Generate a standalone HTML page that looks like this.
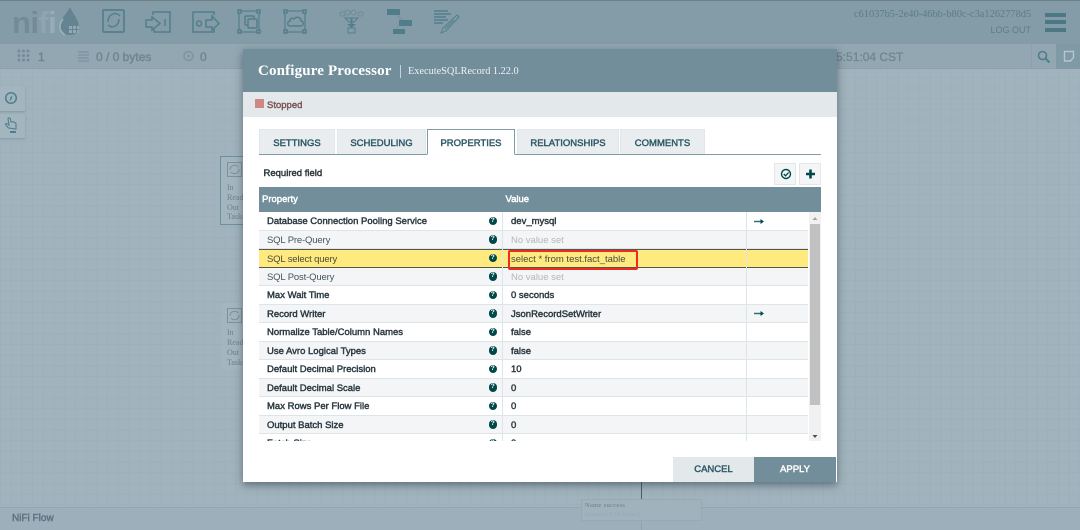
<!DOCTYPE html>
<html><head><meta charset="utf-8">
<style>
*{box-sizing:border-box}
html,body{margin:0;padding:0;width:1080px;height:530px;overflow:hidden;font-family:"Liberation Sans",sans-serif}
.a{position:absolute}
.m{font-weight:normal;-webkit-text-stroke:.45px currentColor}
#root{position:relative;width:1080px;height:530px;overflow:hidden;background:#a1b3bd;
background-image:linear-gradient(#9dafba 1px,transparent 1px),linear-gradient(90deg,#9dafba 1px,transparent 1px);background-size:10.7px 10.7px;background-position:0 2px}
.hdr{left:0;top:0;width:1080px;height:44px;background:#849ca8;border-top:1px solid #6f7f88}
.sb{left:0;top:44px;width:1080px;height:25px;background:#92a7b2;border-bottom:1px solid #8ca1ac}
.st{font-size:12px;color:#6f858f;top:49.500px;line-height:15px;-webkit-text-stroke:.45px #6f858f}
.foot{left:0;top:507px;width:1080px;height:23px;background:#9cafba;border-top:1px solid #92a6b1;font-size:10px;color:#5c7480;-webkit-text-stroke:.45px #5c7480;line-height:22px;padding-left:12px}
.btnl{left:0;width:25px;background:#a3b5bf;box-shadow:0 1px 2px rgba(70,90,100,.3)}
.proc{background:#a3b5bf;font:8px "Liberation Serif",serif;color:#6c818c;overflow:hidden}
.proc div{position:absolute;left:6px}
.dlg{left:243px;top:49px;width:594px;height:433px;background:#fff;box-shadow:0 3px 8px rgba(40,55,65,.55)}
.dh{left:0;top:0;width:594px;height:43px;background:#728e9b}
.title{left:15px;top:11.500px;font:bold 15px/20px "Liberation Serif",serif;letter-spacing:.15px;color:#fff;white-space:nowrap}
.sub{left:165px;top:16px;font:10.300px/14px "Liberation Serif",serif;color:#eef2f4;white-space:nowrap}
.ss{left:0;top:43px;width:594px;height:25px;background:#e3e8eb}
.tab{top:80px;height:25px;background:#e9edef;border:1px solid #e1e6e9;border-bottom:none;font-size:9.500px;-webkit-text-stroke:.45px #2f5a68;color:#2f5a68;text-align:center;line-height:27px;white-space:nowrap}
.tabon{background:#fff;border:1px solid #7f9ba5;border-bottom:1px solid #fff;z-index:2;height:26px}
.sq{top:114px;width:22px;height:22px;background:#f3f5f6;border:1px solid #e3e7ea}
.th{left:16px;top:138px;width:562px;height:25px;background:#728e9b;color:#fff;font-size:9.500px;-webkit-text-stroke:.45px #fff;line-height:26px}
.tb{left:16px;top:163px;width:549px;height:229px;overflow:hidden}
.r{position:absolute;left:0;width:549px;height:18.500px;border-bottom:1px solid #dde5e9;background:#fff;font-size:9.500px;line-height:20px;color:#2d3b42}
.r.o{background:#f3f5f7}
.r .n{position:absolute;left:8px;top:0;white-space:nowrap;-webkit-text-stroke:.45px #2d3b42}
.r .v{position:absolute;left:252px;top:0;white-space:nowrap;-webkit-text-stroke:.45px #2d3b42}
.r .e{color:#b4b8ba;-webkit-text-stroke:0}
.r .l{color:#44565e;-webkit-text-stroke:0;letter-spacing:-.15px}
.r.y{background:#ffea80;border-top:1px solid #55564a;border-bottom:1px solid #55564a;line-height:19px}
.r.y .l,.r.y .v{color:#4a4a3a;-webkit-text-stroke:0}
.q{position:absolute;left:229.500px;top:4.500px;width:8.500px;height:8.500px;border-radius:50%;background:#004849;color:#fff;font:bold 6.500px/8.500px "Liberation Sans",sans-serif;text-align:center}
.div{position:absolute;left:243px;top:0;width:1px;height:229px;background:#dde5e9;z-index:3}
.div2{position:absolute;left:487px;top:0;width:1px;height:229px;background:#dde5e9;z-index:3}
.arr{position:absolute;left:495px;top:5.500px;z-index:4}
.btn{top:408px;height:25px;font-size:9.500px;text-align:center;line-height:26px}
</style></head><body><div id="root">

<div class="a hdr"></div>
<div class="a" style="left:12px;top:7px;font:bold 31px/31px 'Liberation Sans',sans-serif;letter-spacing:-.6px;color:#728b97;white-space:nowrap">ni<span style="color:#8fa5b0">f</span><span style="color:#97acb6">i</span></div>

<svg class="a" style="left:0;top:0" width="560" height="44" fill="none" stroke="#527f8b" stroke-width="1.500">
<path d="M70 7C66 15 59 20 59 27C59 32 64 35 70 35C76 35 79 32 79 27C79 20 73 14 70 7Z" fill="#638490" stroke="none"/>
<path d="M63 19C58 25 59 31 65 35" stroke="#9ab0ba" stroke-width="1.800"/>
<path d="M69 26h3v3h-3zM73 26h3v3h-3zM77 26h2v3h-2zM69 30h3v3h-3zM73 30h3v3h-3zM77 30h2v3h-2z" fill="#92a8b3" stroke="none"/>
<rect x="103" y="10" width="21" height="22" rx="1" stroke-width="1.700"/>
<path d="M108 22c0-8 8-11 12-6M119 19c0 7-7 10-11 6" stroke-width="1.500"/>
<path d="M153 15v-3h17v20h-16v-3M152 17v3h-6v7h6v3l8-6.500zM165 19v7"/>
<path d="M214 15v-3h-21v20h21v-3M212 16v4h-6v7h6v3l7-6.500zM199 21a2.500 2.500 0 1 0 .1 0"/>
<rect x="239" y="11" width="20" height="21" stroke-width="1.200"/><rect x="245" y="16" width="9" height="9" rx="1"/><rect x="248" y="19" width="9" height="9" rx="1" fill="#849ca8"/>
<path d="M238 10h3v3h-3zM257 10h3v3h-3zM238 30h3v3h-3zM257 30h3v3h-3z" fill="#849ca8" stroke-width="1.500"/>
<rect x="285" y="11" width="20" height="21" stroke-width="1.200"/><path d="M284 10h3v3h-3zM303 10h3v3h-3zM284 30h3v3h-3zM303 30h3v3h-3z" fill="#849ca8" stroke-width="1.500"/>
<path d="M290 26h11c3 0 3-5 0-5c0-4-5-5-7-2c-3-2-5 1-4 2c-3 0-3 5 0 5z"/>
<g stroke="#6f8a96" stroke-width="1"><rect x="340" y="12" width="5" height="4" rx="2"/><rect x="345" y="10" width="5" height="5" rx="2.500"/><rect x="351" y="10" width="5" height="5" rx="2.500"/><rect x="358" y="12" width="5" height="4" rx="2"/></g>
<path d="M345 18h13l-4 4h-5z" stroke-width="1"/><path d="M351.500 18v7" stroke-width="2"/><path d="M347 24h9l-4.500 4z" fill="#527f8b" stroke="none"/><rect x="348" y="28" width="7" height="5" stroke-width="1"/>
<path d="M397 15l6 6M398 26l-1 4" stroke="#729099" stroke-width="1"/>
<rect x="387" y="9" width="13" height="6" fill="#4f7e8a" stroke="none"/><rect x="399" y="20" width="13" height="6" fill="#4f7e8a" stroke="none"/><rect x="393" y="29" width="12" height="5" fill="#4f7e8a" stroke="none"/>
<path d="M434 11h14M434 14h17M434 17h12M434 20h14M434 23h9"/>
<path d="M457 15l-14 13-2 5 5-2 13-14zM454 20l-9 9" stroke-width="1"/>
</svg>

<div class="a" style="left:854px;top:9px;width:177px;text-align:right;font:10.400px/12px 'Liberation Serif',serif;color:#5f7a86;white-space:nowrap">c61037b5-2e40-46bb-b80c-c3a1262778d5</div>
<div class="a" style="left:980px;top:24px;width:51px;text-align:right;font-size:9px;line-height:12px;color:#5f7a86;white-space:nowrap">LOG OUT</div>
<div class="a" style="left:1045px;top:13px;width:21px;height:4px;background:#4c7885"></div>
<div class="a" style="left:1045px;top:20px;width:21px;height:4px;background:#4c7885"></div>
<div class="a" style="left:1045px;top:27.500px;width:21px;height:4px;background:#4c7885"></div>

<div class="a sb"></div>
<svg class="a" style="left:0;top:44px" width="260" height="25" fill="none" stroke="#738c98">
<g fill="#738c98" stroke="none"><circle cx="19" cy="7" r="1.500"/><circle cx="23.500" cy="7" r="1.500"/><circle cx="28" cy="7" r="1.500"/><circle cx="19" cy="11.500" r="1.500"/><circle cx="23.500" cy="11.500" r="1.500"/><circle cx="28" cy="11.500" r="1.500"/><circle cx="19" cy="16" r="1.500"/><circle cx="23.500" cy="16" r="1.500"/><circle cx="28" cy="16" r="1.500"/></g>
<path d="M78 8h11M78 11h11M78 14h11M78 17h11" stroke-width="1.500" stroke="#7d95a1"/>
<circle cx="188.500" cy="12" r="4.500" stroke="#7d95a1" stroke-width="1.500"/><circle cx="188.500" cy="12" r="1.500" fill="#7d95a1" stroke="none"/>
</svg>
<div class="a st" style="left:38px">1</div>
<div class="a st" style="left:96px">0 / 0 bytes</div>
<div class="a st" style="left:200px">0</div>
<div class="a st" style="left:836px;width:70px;overflow:hidden;white-space:nowrap;-webkit-text-stroke:.3px #6f858f">5:51:04 CST</div>
<div class="a" style="left:1031px;top:44px;width:1px;height:25px;background:#8aa0ab"></div>
<div class="a" style="left:1056px;top:44px;width:24px;height:25px;background:#7f99a5"></div>
<svg class="a" style="left:1030px;top:44px" width="50" height="25" fill="none">
<circle cx="12.500" cy="11.500" r="4" stroke="#4f7d8a" stroke-width="1.600"/><path d="M15.500 14.500l4 4" stroke="#4f7d8a" stroke-width="2"/>
<path d="M34.500 7.500h9v6l-3 3.500h-6z" stroke="#b7c6cd" stroke-width="1.400"/>
</svg>

<div class="a btnl" style="top:86px;height:25px"></div>
<div class="a btnl" style="top:114px;height:24px"></div>
<svg class="a" style="left:0;top:85px" width="25" height="55" fill="none" stroke="#4f7f8b">
<circle cx="11" cy="13" r="5.300" stroke-width="1.500"/><path d="M12.500 10.500l-1 4-2 1.500 1-4z" fill="#4f7f8b" stroke="none"/>
<path d="M8.500 43c-2-2-3-3-3-4 1-1 2.500 0 3.500 1l-1-6c0-1.500 2-1.500 2.500 0l.5 3c2-.5 5 .5 5 2v5z" stroke-width="1.100"/><path d="M10 46h6v2h-6z" fill="#4f7f8b" stroke="none"/>
</svg>

<div class="a proc" style="left:220px;top:156px;width:24px;height:69px;border:1px solid #6f8f9b">
<svg style="position:absolute;left:6px;top:5px" width="15" height="15" fill="none" stroke="#7d929d"><rect x=".5" y=".5" width="14" height="14"/><path d="M3 8c0-5 6-6 8-3M12 7c0 5-6 6-8 3"/></svg>
<div style="top:26px">In</div><div style="top:36px">Read</div><div style="top:46px">Out</div><div style="top:55px">Tasks</div>
</div>
<div class="a proc" style="left:221px;top:303px;width:23px;height:67px">
<svg style="position:absolute;left:6px;top:5px" width="15" height="15" fill="none" stroke="#7d929d"><rect x=".5" y=".5" width="14" height="14"/><path d="M3 8c0-5 6-6 8-3M12 7c0 5-6 6-8 3"/></svg>
<div style="top:25px">In</div><div style="top:35px">Read</div><div style="top:45px">Out</div><div style="top:55px">Tasks</div>
</div>

<div class="a" style="left:641px;top:482px;width:1px;height:17px;background:#4b5d66"></div>

<div class="a foot">NiFi Flow</div>
<div class="a" style="left:581px;top:499px;width:121px;height:22px;background:#a0b2bc;border:1px solid #96aab4;font:6.500px/9px 'Liberation Serif',serif;color:#66808c;padding:1px 3px;letter-spacing:.3px;white-space:nowrap">Name  success<br><span style="color:#95a9b3">Queued 0 (0 bytes)</span></div>
<div class="a" style="left:641px;top:521px;width:1px;height:9px;background:#8ea3ae"></div>

<div class="a dlg">
 <div class="a dh"></div>
 <div class="a title">Configure Processor</div>
 <div class="a" style="left:157px;top:16px;width:1px;height:13px;background:#c6d2d8"></div>
 <div class="a sub">ExecuteSQLRecord 1.22.0</div>
 <div class="a ss"></div>
 <div class="a" style="left:11.500px;top:50px;width:9px;height:9px;background:#d18686"></div>
 <div class="a m" style="left:24px;top:49.500px;font-size:9.500px;color:#7a5858;line-height:13px">Stopped</div>

 <div class="a" style="left:16px;top:105px;width:562px;height:1px;background:#7f9ba5"></div>
 <div class="a tab" style="left:16px;width:76px">SETTINGS</div>
 <div class="a tab" style="left:94px;width:89px">SCHEDULING</div>
 <div class="a tab tabon" style="left:184px;width:88px">PROPERTIES</div>
 <div class="a tab" style="left:274px;width:102px">RELATIONSHIPS</div>
 <div class="a tab" style="left:377px;width:85px">COMMENTS</div>

 <div class="a m" style="left:20.500px;top:118px;font-size:9.500px;color:#2b363b;line-height:13px">Required field</div>
 <div class="a sq" style="left:531px"></div>
 <div class="a sq" style="left:556px"></div>
 <svg class="a" style="left:531px;top:114px" width="48" height="22" fill="none" stroke="#004849">
  <circle cx="12" cy="11" r="4.500" stroke-width="1.400"/><path d="M9.800 11l1.800 1.800 3-3.300" stroke-width="1.300"/>
  <path d="M36.500 6.500v9M32 11h9" stroke-width="2.600"/>
 </svg>

 <div class="a th"><span class="a" style="left:3px">Property</span><span class="a" style="left:246.500px">Value</span></div>

 <div class="a tb">
  <div class="div"></div><div class="div2"></div>
  <div class="r" style="top:0"><span class="n">Database Connection Pooling Service</span><i class="q">?</i><span class="v">dev_mysql</span></div>
  <div class="r o" style="top:18.500px"><span class="n l">SQL Pre-Query</span><i class="q">?</i><span class="v e">No value set</span></div>
  <div class="r y" style="top:37px"><span class="n l" style="top:-.5px">SQL select query</span><i class="q" style="top:3.500px">?</i><span class="v" style="top:-.5px">select * from test.fact_table</span></div>
  <div class="r o" style="top:55.500px"><span class="n l">SQL Post-Query</span><i class="q">?</i><span class="v e">No value set</span></div>
  <div class="r" style="top:74px"><span class="n">Max Wait Time</span><i class="q">?</i><span class="v">0 seconds</span></div>
  <div class="r o" style="top:92.500px"><span class="n">Record Writer</span><i class="q">?</i><span class="v">JsonRecordSetWriter</span></div>
  <div class="r" style="top:111px"><span class="n">Normalize Table/Column Names</span><i class="q">?</i><span class="v">false</span></div>
  <div class="r o" style="top:129.500px"><span class="n">Use Avro Logical Types</span><i class="q">?</i><span class="v">false</span></div>
  <div class="r" style="top:148px"><span class="n">Default Decimal Precision</span><i class="q">?</i><span class="v">10</span></div>
  <div class="r o" style="top:166.500px"><span class="n">Default Decimal Scale</span><i class="q">?</i><span class="v">0</span></div>
  <div class="r" style="top:185px"><span class="n">Max Rows Per Flow File</span><i class="q">?</i><span class="v">0</span></div>
  <div class="r o" style="top:203.500px"><span class="n">Output Batch Size</span><i class="q">?</i><span class="v">0</span></div>
  <div class="r" style="top:222px"><span class="n">Fetch Size</span><i class="q">?</i><span class="v">0</span></div>
  <svg class="arr" width="10" height="7"><path d="M0 3.500h7" stroke="#2f6f78" stroke-width="1.500"/><path d="M6.500 1l3.500 2.500-3.500 2.500z" fill="#004849"/></svg>
  <svg class="arr" style="top:98px" width="10" height="7"><path d="M0 3.500h7" stroke="#2f6f78" stroke-width="1.500"/><path d="M6.500 1l3.500 2.500-3.500 2.500z" fill="#004849"/></svg>
 </div>

 <div class="a" style="left:566px;top:163px;width:12px;height:229px;background:#f1f1f1"></div>
 <div class="a" style="left:567px;top:175px;width:10px;height:181px;background:#c1c1c1"></div>
 <svg class="a" style="left:566px;top:163px" width="12" height="229"><path d="M3.500 8l2.500-3 2.500 3z" fill="#a3a3a3"/><path d="M3.500 223h5l-2.500 3z" fill="#505050"/></svg>

 <div class="a" style="left:265px;top:201px;width:130px;height:20px;border:2px solid #ee2a24;border-radius:2px;z-index:5"></div>

 <div class="a btn" style="left:430px;width:81px;background:#e3e8eb;color:#2f5a68;-webkit-text-stroke:.45px #2f5a68">CANCEL</div>
 <div class="a btn" style="left:511px;width:82px;background:#728e9b;color:#fff;-webkit-text-stroke:.45px #fff">APPLY</div>
</div>

</div></body></html>
